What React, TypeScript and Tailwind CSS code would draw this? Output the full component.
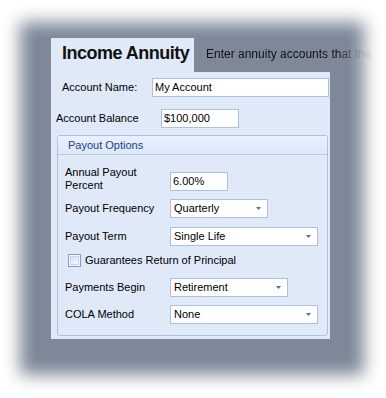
const font = { fontFamily: '"Liberation Sans", Arial, sans-serif' };

const Arrow = () => (
  <svg width="5" height="3" viewBox="0 0 5 3" className="mb-[1px]">
    <polygon points="0,0 5,0 2.5,3" fill="#4a70b5" />
  </svg>
);

const TextBox = ({ value, w }: { value: string; w: string }) => (
  <div
    className={`${w} flex h-[19px] items-center border border-[#abc1e0] bg-white pl-[2px] text-[11px] text-black`}
  >
    {value}
  </div>
);

const Select = ({ value, w }: { value: string; w: string }) => (
  <div
    className={`${w} flex h-[19px] items-center justify-between border border-[#abc1e0] bg-white pl-[3px] pr-[6px] text-[11px] text-black`}
  >
    <span>{value}</span>
    <Arrow />
  </div>
);

const Row = ({ label, children, mt }: { label: string; children: React.ReactNode; mt: string }) => (
  <div className={`${mt} flex items-center pl-[7px]`}>
    <span className="w-[105px] text-[11px] text-black">{label}</span>
    {children}
  </div>
);

export default function App() {
  return (
    <div className="h-[398px] w-[386px] overflow-hidden bg-white pl-[36px] pt-[38px]" style={font}>
      <div className="h-[321px] w-[312px] bg-[#7e8898] pl-[15px] shadow-[0_0_16px_16px_#7e8898]">
        <div className="flex items-start">
          <div className="h-[34px] w-[143px] shrink-0 bg-[#dfe9f8] pl-[11px] pt-[4px]">
            <h1 className="whitespace-nowrap text-[18px] font-bold leading-[22px] tracking-[-0.5px] text-[#111]">
              Income Annuity
            </h1>
          </div>
          <p className="ml-[12px] mt-[9px] whitespace-nowrap bg-[linear-gradient(to_right,#111111_0,#111111_132px,#ffffff_172px)] bg-clip-text text-[12px] leading-[15px] text-transparent">
            Enter annuity accounts that the
          </p>
        </div>

        <div className="flex h-[267px] w-[279px] flex-col bg-[#dfe9f8]">
          <div className="mt-[6px] flex items-center pl-[11px]">
            <span className="w-[90px] text-[11px] text-black">Account Name:</span>
            <TextBox value="My Account" w="w-[177px]" />
          </div>
          <div className="mt-[12px] flex items-center pl-[5px]">
            <span className="w-[105px] text-[11px] text-black">Account Balance</span>
            <TextBox value="$100,000" w="w-[78px]" />
          </div>

          <div className="ml-[6px] mt-[7px] h-[201px] w-[271px] rounded-[3px] border border-[#a9c1e2]">
            <div className="flex h-[19px] items-center border-b border-[#b4c9e8] bg-[linear-gradient(to_bottom,#eaf1fc,#dde8f8)] pl-[10px] text-[11px] text-[#15428b]">
              Payout Options
            </div>

            <div className="mt-[11px] flex items-start pl-[7px]">
              <span className="w-[105px] text-[11px] leading-[13px] text-black">
                Annual Payout
                <br />
                Percent
              </span>
              <div className="mt-[6px]">
                <TextBox value="6.00%" w="w-[58px]" />
              </div>
            </div>

            <Row label="Payout Frequency" mt="mt-[7px]">
              <Select value="Quarterly" w="w-[98px]" />
            </Row>
            <Row label="Payout Term" mt="mt-[9px]">
              <Select value="Single Life" w="w-[148px]" />
            </Row>

            <div className="mt-[8px] flex h-[13px] items-center pl-[10px]">
              <div className="flex h-[13px] w-[13px] items-center justify-center border border-[#7f9fd0] bg-[#f4f7fc]">
                <div className="h-[9px] w-[9px] border border-[#c5d5ec] bg-[linear-gradient(135deg,#d9e3f2,#f7f9fd)]" />
              </div>
              <span className="ml-[4px] text-[11px] text-black">Guarantees Return of Principal</span>
            </div>

            <Row label="Payments Begin" mt="mt-[11px]">
              <Select value="Retirement" w="w-[118px]" />
            </Row>
            <Row label="COLA Method" mt="mt-[8px]">
              <Select value="None" w="w-[148px]" />
            </Row>
          </div>
        </div>
      </div>
    </div>
  );
}
